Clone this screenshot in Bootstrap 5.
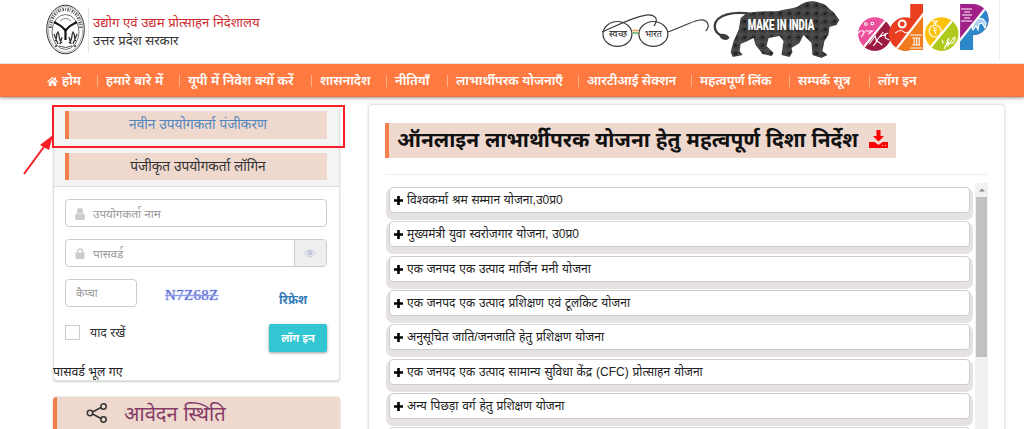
<!DOCTYPE html>
<html lang="hi">
<head>
<meta charset="utf-8">
<meta name="viewport" content="width=device-width, initial-scale=1">
<title>उद्योग एवं उद्यम प्रोत्साहन निदेशालय</title>
<link href="https://cdn.jsdelivr.net/npm/bootstrap@5.3.0/dist/css/bootstrap.min.css" rel="stylesheet">
<style>
body{font-family:"Liberation Sans","Noto Sans",sans-serif;font-size:12px;color:#333;background:#fff;height:429px;overflow:hidden;line-height:1.3}
a{text-decoration:none}
.txt{white-space:nowrap}
.site-head{height:64px;border-bottom:1px solid #e3e3e3;padding-left:46px}
.site-head .emblem{width:39px;height:51px;margin-top:4px}
.site-title{border-left:1px solid #e6e6e6;height:46px;margin:7px 0 0 3px;padding:7px 0 0 4px;font-size:13.15px}
.site-title div{height:18px;line-height:18px}
.site-title .red{color:#cf2a2e}
.partners{width:400px;height:60px;margin-right:24px;border-right:1px solid #f0f0f0}
.main-nav{height:33px;background:#ff7a40;padding-left:47px;border-bottom:1px solid #e8733f;box-shadow:0 2px 2px #bbb;position:relative}
.main-nav li{height:32px;line-height:33px;font-size:13px;font-weight:600}
.main-nav a{color:#fff}
.main-nav li+li::before{content:"";display:inline-block;width:1px;height:12px;background:#ffb08c;margin-right:8px;vertical-align:-2px}
.nv1{width:50px}.nv2{width:82px}.nv3{width:132px}.nv4{width:75px}.nv5{width:61px}.nv6{width:131px}.nv7{width:113px}.nv8{width:98px}.nv9{width:80px}.nv10{width:60px}
.page-main{padding:8px 20px 0 53px;height:332px;overflow:hidden}
.side{width:287px;flex:none}
.panel{border:1px solid #e2e2e2;border-radius:4px;box-shadow:0 1px 2px #ccc;height:276px;background:#fff}
.panel-top{height:81px;background:#f4f4f4;border-bottom:1px solid #ddd;padding:5px 12px 0 11px}
.strip{background:#efd9cf;border-left:4px solid #f5804b;height:28px;font-size:13.7px;line-height:27px;text-align:center}
.strip+.strip{margin-top:14px;height:27px}
.strip a{color:#5486bd}
.panel-form{padding:12px 12px 0 11px}
.field{height:28px;border:1px solid #ccc;border-radius:4px;color:#999;background:#fff;font-size:11.7px}
.field svg{margin:1px 8px 0 9px}
.field>span{position:relative;top:1px}
.field+.field{margin-top:12px}
.captcha-field{width:72px;padding:5px 0 0 10px;font-size:11px}
.captcha-row{margin-top:12px}
.captcha-code{font-family:"Liberation Serif",serif;font-size:15px;letter-spacing:.3px;color:#5364cc;text-decoration:line-through 1px #8f9be0;text-shadow:0 0 2px #aab4ff;margin:7px 0 0 28px}
.refresh{color:#337ab7;margin:14px 20px 0 0}
.remember{margin-top:15px}
.remember .lbl{margin:2px 0 0 10px;font-size:12.3px}
.forgot{margin:13px 0 0 -1px;color:#222;font-size:12.3px}
.eye{width:32px;height:26px;background:#eee;border-left:1px solid #ccc;border-radius:0 3px 3px 0}
.tick{width:15px;height:15px;border:1px solid #ccc;margin-top:1px}
.btn.login-btn{background:#32c5d2;color:#fff;width:58px;height:28px;border-radius:2px;font-size:11px;font-weight:700;padding:0;box-shadow:0 1px 3px #999;line-height:26px}
.status-box{height:60px;margin-top:16px;background:#efd9cf;border-left:4px solid #f5804b;border-radius:4px;box-shadow:0 0 2px #bbb;color:#863b67;font-size:20.2px;line-height:34px}
.status-box svg{margin:5px 16px 0 29px}
.guide{width:637px;flex:none;height:340px;margin:-1px 0 0 28px;border:1px solid #e5e5e5;border-radius:4px;box-shadow:0 0 3px #ddd;padding:18px 16px 0 16px}
.guide h1{display:flex;width:511px;height:35px;background:#efd9cf;border-left:4px solid #f5804b;font-size:20.9px;font-weight:700;color:#111;line-height:34px;padding-left:8px;margin:0}
.guide h1 svg{margin:7px 8px 0 0}
.guide .rule{height:1px;background:#eee;margin:16px 0 8px}
.scroller{height:250px;overflow:hidden}
.schemes{width:589px;padding:4px 4px 0 4px}
.scheme{height:26px;margin-bottom:8.33px;background:#fff;border:1px solid #ccc;border-radius:4px;box-shadow:0 4px 0 3px #e6e2e1;clip-path:inset(0 -4px -8px -4px);color:#222;padding-left:4px;line-height:24px;font-size:12px;word-spacing:.5px}
.scheme svg{margin:0 4px 0 0;vertical-align:-1px}
.sbar{width:13px;height:250px;background:#f1f1f1}
.sbar svg{margin-bottom:-14px}
.sbar .thumb{width:11px;height:160px;background:#c1c1c1;margin:14px 1px 0}
.marker{position:absolute;left:0;top:0;pointer-events:none}
</style>
</head>
<body>
<header class="site-head d-flex">
  <svg class="emblem" viewBox="0 0 39 51" fill="none" stroke="#333">
    <ellipse cx="19.500" cy="25.500" rx="18.800" ry="24.300" stroke-width="1"/>
    <ellipse cx="19.500" cy="25.500" rx="17.300" ry="22.800" stroke-width=".4"/>
    <path d="M4.500 24C5 12 11 5.500 19.500 5.500S34 12 34.500 24" stroke-dasharray="1.500 1 .8 1.400" stroke-width="3.200" opacity=".8"/>
    <ellipse cx="19.500" cy="28" rx="13.500" ry="17.500" fill="#fff" stroke-width=".7"/>
    <path d="M8 18c5 3 9 4 11.500 9C22 22 26 21 31 18M19.500 26v10" stroke="#111" stroke-width="2.200"/>
    <path d="M9 37c3-2 0-6 3-9 2 3 0 8 4 11M30 37c-3-2 0-6-3-9-2 3 0 8-4 11M8 30l4 10M31 30l-4 10M16 33l-2 7M23 33l2 7" stroke-width="1.300"/>
    <path d="M13 42q6.500 3 13 0" stroke="#222" stroke-width=".8"/>
    <path d="M14 17q5.500-5 11 0" stroke-width=".6"/>
    <circle cx="10" cy="42" r=".6" fill="#222"/><circle cx="29" cy="42" r=".6" fill="#222"/>
  </svg>
  <div class="site-title">
    <div class="txt red">उद्योग एवं उद्यम प्रोत्साहन निदेशालय</div>
    <div class="txt">उत्तर प्रदेश सरकार</div>
  </div>
  <svg class="partners ms-auto" viewBox="600 0 400 60">
    <g fill="none" stroke="#3a3a3a" stroke-width="1.200">
      <ellipse cx="617.500" cy="34" rx="14.500" ry="12.500"/>
      <ellipse cx="653.500" cy="34" rx="14.500" ry="12.500"/>
      <path d="M602 32C616 26 630 18 646 15c8-1 14 3 8 11M668 32c14-5 22-10 32-12 8-1 11 6 6 11"/>
    </g>
    <path d="M632.500 30.500h6" stroke="#f79a3c" stroke-width="1.500"/><path d="M632.500 33h6" stroke="#43a047" stroke-width="1.300"/>
    <text x="609" y="37" font-size="9" textLength="18" lengthAdjust="spacingAndGlyphs" fill="#222">स्वच्छ</text>
    <text x="645" y="37" font-size="9" textLength="17" lengthAdjust="spacingAndGlyphs" fill="#222">भारत</text>
    <defs>
      <pattern id="cogs" width="9" height="8" patternUnits="userSpaceOnUse"><rect width="9" height="8" fill="#3d3b3b"/><circle cx="2.500" cy="2.500" r="1.700" fill="none" stroke="#777" stroke-width=".6"/><circle cx="7" cy="5.500" r="1.300" fill="#191919"/><path d="M0 6l3 1M5 1l3 1" stroke="#666" stroke-width=".6"/></pattern>
      <clipPath id="o1"><circle cx="875.500" cy="34" r="16.700"/></clipPath>
      <clipPath id="dd"><path d="M911 4h13v46h-13v0a16.700 16.700 0 1 1 0-32z"/></clipPath>
      <clipPath id="o2"><circle cx="942.500" cy="34" r="16.700"/></clipPath>
      <clipPath id="pp"><path d="M961 4h13a15.500 15.500 0 0 1 0 31v15h-13z"/></clipPath>
    </defs>
    <path d="M752 14C735 11 716 14 715 26c0 6 4 9 9 10" fill="none" stroke="#403e3e" stroke-width="2.400"/>
    <path d="M720 34q7-1 10 4l-3 2q-6 0-7-4z" fill="#3c3a3a"/>
    <path fill="url(#cogs)" d="M746 14C755 10 769 12 779 11C790 8 797 9 802 4C807 1 814 0 821 3C827 4 829 9 834 12L840 20L837 25L830 27L829 35L825 41L823 51L828 55L822 58L813 55L812 43L804 35L800 43L792 48L793 52L790 57L782 55L784 41L780 36L769 38L767 46L774 53L772 56L763 54L756 45L754 38L748 41L741 44L740 51L743 55L733 57L731 52L734 41L739 30L741 18Z"/>
    <text x="748" y="30" font-family="Roboto,sans-serif" font-weight="900" font-size="14" fill="#fff" textLength="67" lengthAdjust="spacingAndGlyphs">MAKE IN INDIA</text>
    <g clip-path="url(#o1)"><path d="M855 10h45v45h-45z" fill="#ec4f9b"/><path d="m858 55 36-44h10v45z" fill="#9d1c42"/><path d="m858 55 36-44" stroke="#fff" stroke-width="2.200"/></g>
    <g clip-path="url(#dd)"><path d="M885 0h45v55h-45z" fill="#e93f20"/><path d="m894 53 34-44v46z" fill="#f17a1d"/><path d="m894 53 34-44" stroke="#fff" stroke-width="2.200"/></g>
    <g clip-path="url(#o2)"><path d="M922 10h45v45h-45z" fill="#fcc20a"/><path d="m925 55 36-44h10v45z" fill="#afc91c"/><path d="m925 55 36-44" stroke="#fff" stroke-width="2.200"/></g>
    <g clip-path="url(#pp)"><path d="M955 0h40v55h-40z" fill="#a02087"/><path d="m956 46 34-42h8v50h-42z" fill="#2c88c8"/><path d="m956 46 34-42" stroke="#fff" stroke-width="2.200"/></g>
    <g fill="none" stroke="#fff" stroke-width="1.100">
      <circle cx="866.500" cy="24" r="1.300" fill="#a02a5c"/><circle cx="873" cy="23.500" r="1.300" fill="#a02a5c"/><path d="M859 33q3-4 6-1l-3 5M866 31h7l-4 3M870 44l6-8 1 5 7-9M874 46l4-5 5 4M880 37l9-4M886 33v5l4 2"/>
      <circle cx="903" cy="24" r="3.500" stroke-width="2"/><path d="M896 33q6-5 10 0l4-1"/><path d="M911 35h12M913 38h8M915 38v7M917.500 38v7M920 38v7M913 45h8M911 48h12"/>
      <circle cx="936" cy="31" r="6"/><path d="M934 21h4l-2 3zM934 28h4m-4 2h4m-3 0 2 4" /><path d="M945 49l5-11M950 38l-2 3 2 2-3 2M948 47l7-10M956 37l-1 5-3 2M943 40l1 4"/>
      <path d="M962 9h11M965 12h6M963 15h10M965 18h6M962 21h11"/><path d="M973 28l3-7 4-3 4 1 3 4-1 5-3-5-3 1-1 6-2-4-3 4z" fill="#fff" fill-opacity=".6"/>
    </g>
  </svg>
</header>
<nav class="main-nav">
  <ul class="list-unstyled d-flex m-0">
    <li class="nv1 txt"><a href="#"><svg width="11" height="9" viewBox="0 0 22 18" fill="#fff"><path d="M11 0 0 9l1.500 2L11 3.500 20.500 11 22 9l-4-3.300V1h-3v2.500z"/><path d="m11 5.500-7.500 6V18H9v-5h4v5h5.500v-6.500z"/></svg><span class="ms-1">होम</span></a></li>
    <li class="nv2 txt"><a href="#">हमारे बारे में</a></li>
    <li class="nv3 txt"><a href="#">यूपी में निवेश क्यों करें</a></li>
    <li class="nv4 txt"><a href="#">शासनादेश</a></li>
    <li class="nv5 txt"><a href="#">नीतियाँ</a></li>
    <li class="nv6 txt"><a href="#">लाभार्थीपरक योजनाएँ</a></li>
    <li class="nv7 txt"><a href="#">आरटीआई सेक्शन</a></li>
    <li class="nv8 txt"><a href="#">महत्वपूर्ण लिंक</a></li>
    <li class="nv9 txt"><a href="#">सम्पर्क सूत्र</a></li>
    <li class="nv10 txt"><a href="#">लॉग इन</a></li>
  </ul>
</nav>
<main class="page-main d-flex align-items-start">
  <div class="side">
    <section class="panel">
      <div class="panel-top">
        <div class="strip txt"><a href="#">नवीन उपयोगकर्ता पंजीकरण</a></div>
        <div class="strip txt">पंजीकृत उपयोगकर्ता लॉगिन</div>
      </div>
      <div class="panel-form">
        <div class="field d-flex align-items-center txt"><svg width="10" height="12" viewBox="0 0 10 12" fill="#ccc"><circle cx="5" cy="3" r="3"/><path d="M2 5q3 3 6 0 2 1 2 5 0 2-2 2H2q-2 0-2-2 0-4 2-5"/></svg><span>उपयोगकर्ता नाम</span></div>
        <div class="field d-flex align-items-center txt"><svg width="10" height="11" viewBox="0 0 10 11"><path d="M2.500 5V3.500a2.500 2.500 0 0 1 5 0V5" fill="none" stroke="#ccc" stroke-width="1.500"/><rect x=".5" y="4.500" width="9" height="6.500" rx="1" fill="#ccc"/></svg><span>पासवर्ड</span>
          <div class="eye ms-auto d-flex align-items-center"><svg width="12" height="9" viewBox="0 0 12 9"><path d="M.5 4.500q5.500-7 11 0-5.500 7-11 0z" fill="none" stroke="#c3cbdc"/><circle cx="6" cy="4" r="2.600" fill="#c3cbdc"/></svg></div></div>
        <div class="captcha-row d-flex align-items-start">
          <div class="field captcha-field txt"><span>कैप्चा</span></div>
          <span class="captcha-code">N7Z68Z</span>
          <a href="#" class="refresh txt ms-auto fw-bold">रिफ्रेश</a>
        </div>
        <div class="remember d-flex align-items-start">
          <span class="tick"></span><span class="lbl txt">याद रखें</span>
          <button class="btn login-btn ms-auto txt">लॉग इन</button>
        </div>
      </div>
      <div class="forgot txt">पासवर्ड भूल गए</div>
    </section>
    <section class="status-box txt d-flex">
      <svg width="22" height="22" viewBox="0 0 22 22" fill="none" stroke="#333" stroke-width="1.500"><circle cx="4" cy="11" r="2.700"/><circle cx="17.500" cy="4.500" r="2.700"/><circle cx="17.500" cy="17.500" r="2.700"/><path d="m6.500 10 8.500-4.500M6.500 12l8.500 4.500"/></svg>
      <span>आवेदन स्थिति</span>
    </section>
  </div>
  <section class="guide">
    <h1 class="txt"><span>ऑनलाइन लाभार्थीपरक योजना हेतु महत्वपूर्ण दिशा निर्देश</span>
      <svg class="ms-auto" width="19" height="18" viewBox="0 0 19 18" fill="red"><path d="M7.500 0h4v6H15l-5.500 5.500L4 6h3.500zM0 12h5.500l4 3 4-3H19v6H0z"/><path d="M13 15.500h1.200M16 15.500h1.200" stroke="#efd9cf"/></svg></h1>
    <div class="rule"></div>
    <div class="scroller d-flex">
      <div class="schemes">
        <div class="scheme txt"><svg width="9" height="9" viewBox="0 0 9 9"><path d="M4.500 0v9M0 4.500h9" stroke="#000" stroke-width="2.600"/></svg><span>विश्वकर्मा श्रम सम्मान योजना,उ0प्र0</span></div>
        <div class="scheme txt"><svg width="9" height="9" viewBox="0 0 9 9"><path d="M4.500 0v9M0 4.500h9" stroke="#000" stroke-width="2.600"/></svg><span>मुख्यमंत्री युवा स्वरोजगार योजना, उ0प्र0</span></div>
        <div class="scheme txt"><svg width="9" height="9" viewBox="0 0 9 9"><path d="M4.500 0v9M0 4.500h9" stroke="#000" stroke-width="2.600"/></svg><span>एक जनपद एक उत्पाद मार्जिन मनी योजना</span></div>
        <div class="scheme txt"><svg width="9" height="9" viewBox="0 0 9 9"><path d="M4.500 0v9M0 4.500h9" stroke="#000" stroke-width="2.600"/></svg><span>एक जनपद एक उत्पाद प्रशिक्षण एवं टूलकिट योजना</span></div>
        <div class="scheme txt"><svg width="9" height="9" viewBox="0 0 9 9"><path d="M4.500 0v9M0 4.500h9" stroke="#000" stroke-width="2.600"/></svg><span>अनुसूचित जाति/जनजाति हेतु प्रशिक्षण योजना</span></div>
        <div class="scheme txt"><svg width="9" height="9" viewBox="0 0 9 9"><path d="M4.500 0v9M0 4.500h9" stroke="#000" stroke-width="2.600"/></svg><span>एक जनपद एक उत्पाद सामान्य सुविधा केंद्र (CFC) प्रोत्साहन योजना</span></div>
        <div class="scheme txt"><svg width="9" height="9" viewBox="0 0 9 9"><path d="M4.500 0v9M0 4.500h9" stroke="#000" stroke-width="2.600"/></svg><span>अन्य पिछड़ा वर्ग हेतु प्रशिक्षण योजना</span></div>
        <div class="scheme"></div>
      </div>
      <div class="sbar ms-auto"><svg class="d-block" width="13" height="14"><path d="M4 8.500h6L7 5.500z" fill="#888"/></svg><div class="thumb"></div></div>
    </div>
  </section>
</main>
<svg class="marker" width="360" height="190" viewBox="0 0 360 190"><rect x="53" y="106" width="291" height="41" fill="none" stroke="#fa1f25" stroke-width="2"/><path d="M24 174 46 144" stroke="#fa1f25" stroke-width="2"/><path d="m53 135-13 10 9 5z" fill="#fa1f25"/></svg>
<script src="https://cdn.jsdelivr.net/npm/bootstrap@5.3.0/dist/js/bootstrap.bundle.min.js"></script>
</body>
</html>
